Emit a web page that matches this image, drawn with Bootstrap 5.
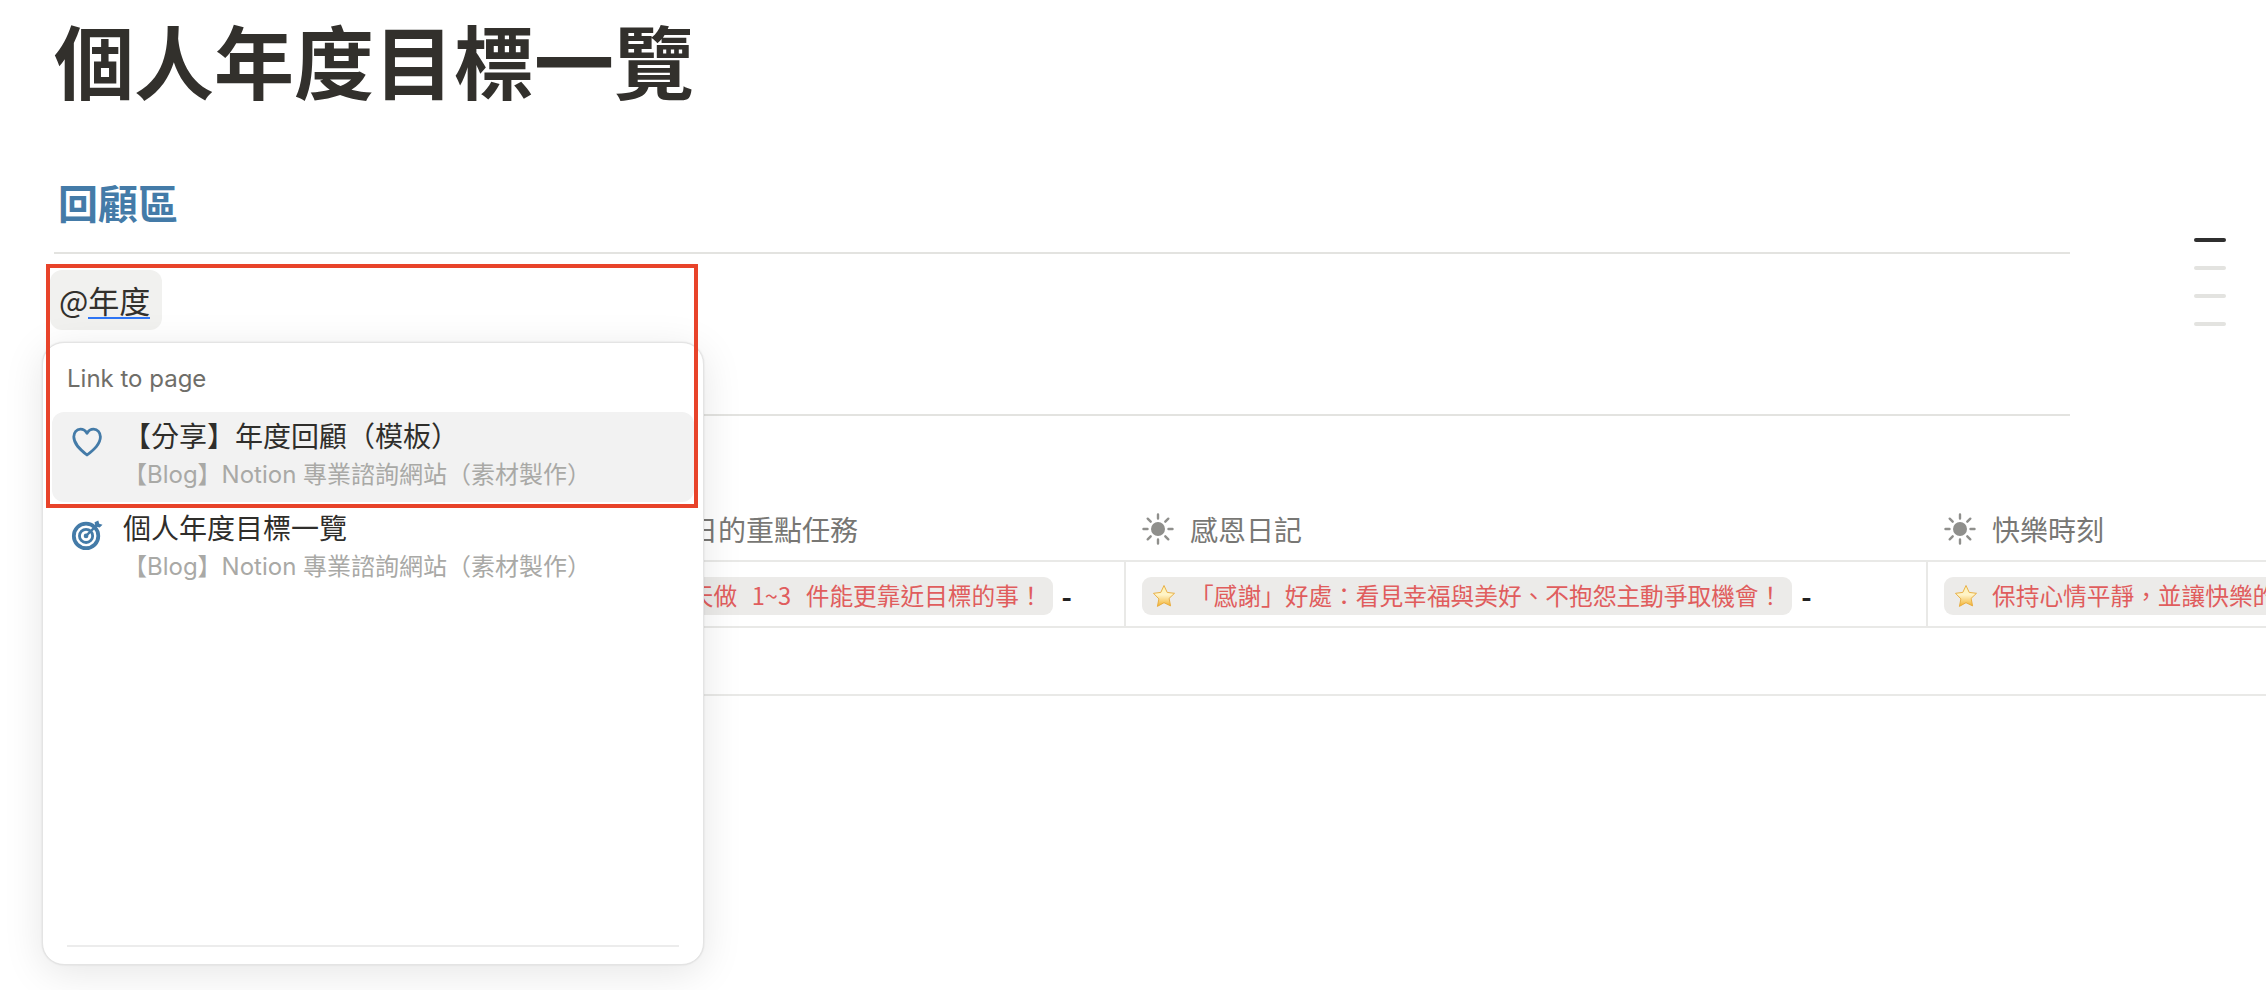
<!DOCTYPE html>
<html lang="zh-Hant">
<head>
<meta charset="utf-8">
<title>個人年度目標一覽</title>
<link href="https://cdn.jsdelivr.net/npm/bootstrap@5.3.0/dist/css/bootstrap.min.css" rel="stylesheet">
<style>
html,body{height:990px;overflow:hidden;background:#fff}
body{font-family:Inter,"Noto Sans CJK TC",sans-serif;color:#37352f}
.pg{width:2266px;height:990px;overflow:hidden;padding-left:54px}
.doc-title{font-family:"Noto Sans CJK TC",sans-serif;font-size:80px;font-weight:700;line-height:92px;margin:12px 0 0 0;color:#32302c}
.sect{font-family:"Noto Sans CJK TC",sans-serif;font-size:40px;font-weight:700;line-height:52px;margin:72px 0 0 4px;color:#447ba8}
.rule{height:2px;background:#e3e3e0;width:2016px}
.rule-a{margin-top:24px}
.zone{height:160px;padding-top:16px}
.chip{margin-left:-4px;width:112px;height:60px;background:#f1f1ef;border-radius:12px;padding-left:9px;font-size:31px;font-family:"Noto Sans CJK TC",sans-serif;color:#32302c;white-space:nowrap}
.chip u{text-decoration:none;border-bottom:2.500px solid #2f76f5;display:block;line-height:35px}
.tbl{margin-top:97px;display:grid;grid-template-columns:546px 524px 802px 400px;width:2272px}
.th{height:32px;display:flex;align-items:center;gap:16px;padding-left:18px;font-size:28px;line-height:32px;color:#787774;font-family:"Noto Sans CJK TC",sans-serif;white-space:nowrap}
.th-near{padding-left:14px}
.trow{grid-column:1/-1;height:2px;background:#e9e9e7;width:2212px}
.trow-a{margin-top:15px}
.td{height:64px;padding:15px 0 0 16px;display:flex;align-items:flex-start;border-left:2px solid #e9e9e7;white-space:nowrap;font-family:"Noto Sans CJK TC",sans-serif}
.td-blank{border-left:0}
.tag{display:inline-flex;align-items:center;height:38px;background:#ecebe9;border-radius:9px;padding:0 10px;font-size:23.700px;color:#e05d5d;white-space:pre;gap:14px}
.tag-wide{word-spacing:2px}
.dash{margin-left:9px;font-size:28px;font-weight:600;line-height:38px;color:#222}
.rule-c{margin-top:66px;width:2212px;background:#e9e9e7}
.toc{right:40px;top:238px;width:32px;gap:24px}
.toc i{display:block;height:4px;border-radius:2px;background:#e3e3e0}
.toc i:first-child{background:#2f2f2f}
.pop{left:42px;top:342px;width:662px;height:623px;background:#fff;border:1px solid #e4e4e4;border-radius:22px;box-shadow:0 0 2px rgba(0,0,0,.12),0 8px 40px rgba(0,0,0,.1);padding:0 9px;z-index:2}
.pop-h{height:69px;padding:20px 0 0 15px;font-size:24px;line-height:32px;color:#6f6e69}
.item{height:90px;border-radius:12px;padding-left:19px;gap:20px}
.item-on{background:#f2f2f2}
.item+.item{padding-top:2px}
.item-t{font-size:28px;line-height:36px;color:#2f2e2b;padding-top:5px;font-family:"Noto Sans CJK TC",sans-serif;white-space:nowrap}
.item-s{font-size:24px;line-height:36px;color:#a9a9a6;padding-top:4px;white-space:nowrap}
.ico{width:32px;flex:none;margin-top:14px}
.pop-f{height:2px;background:#ececec;margin:auto 15px 17px 15px}
.mark-box{left:46px;top:264px;width:652px;height:244px;border:4px solid #e8432a;z-index:3;pointer-events:none}
</style>
</head>
<body>
<div class="pg position-relative">
  <h1 class="doc-title">個人年度目標一覽</h1>
  <h2 class="sect">回顧區</h2>
  <div class="rule rule-a"></div>
  <div class="zone"><div class="chip d-flex align-items-center"><span>@</span><u>年度</u></div></div>
  <div class="rule"></div>
  <div class="tbl">
    <div class="th"></div>
    <div class="th th-near"><svg width="32" height="32" viewBox="0 0 32 32"><g stroke="#8f8f8c" stroke-width="2.400" stroke-linecap="round"><path d="M16 1.500v4M16 26.500v4M1.500 16h4M26.500 16h4M5.700 5.700l3 3M23.300 23.300l3 3M5.700 26.300l3-3M23.300 8.700l3-3"/></g><circle cx="16" cy="16" r="7" fill="#8f8f8c"/></svg><span>今日的重點任務</span></div>
    <div class="th"><svg width="32" height="32" viewBox="0 0 32 32"><g stroke="#8f8f8c" stroke-width="2.400" stroke-linecap="round"><path d="M16 1.500v4M16 26.500v4M1.500 16h4M26.500 16h4M5.700 5.700l3 3M23.300 23.300l3 3M5.700 26.300l3-3M23.300 8.700l3-3"/></g><circle cx="16" cy="16" r="7" fill="#8f8f8c"/></svg><span>感恩日記</span></div>
    <div class="th"><svg width="32" height="32" viewBox="0 0 32 32"><g stroke="#8f8f8c" stroke-width="2.400" stroke-linecap="round"><path d="M16 1.500v4M16 26.500v4M1.500 16h4M26.500 16h4M5.700 5.700l3 3M23.300 23.300l3 3M5.700 26.300l3-3M23.300 8.700l3-3"/></g><circle cx="16" cy="16" r="7" fill="#8f8f8c"/></svg><span>快樂時刻</span></div>
    <div class="trow trow-a"></div>
    <div class="td td-blank"></div>
    <div class="td"><span class="tag tag-wide"><svg width="24" height="24" viewBox="0 0 24 24"><defs><linearGradient id="st" x1="0" y1="0" x2="0" y2="1"><stop offset="0" stop-color="#fff3b0"/><stop offset=".45" stop-color="#fff4c8"/><stop offset="1" stop-color="#f2b12e"/></linearGradient></defs><path d="M12 1.500l3.200 6.900 7.300.9-5.400 5.100 1.500 7.500L12 18.700l-6.600 3.700 1.500-7.500L1.500 9.300l7.300-.9z" fill="url(#st)" stroke="#e6a93a" stroke-width=".9" stroke-linejoin="round"/></svg><span>今天做  1~3  件能更靠近目標的事！</span></span><span class="dash">-</span></div>
    <div class="td"><span class="tag"><svg width="24" height="24" viewBox="0 0 24 24"><path d="M12 1.500l3.200 6.900 7.300.9-5.400 5.100 1.500 7.500L12 18.700l-6.600 3.700 1.500-7.500L1.500 9.300l7.300-.9z" fill="url(#st)" stroke="#e6a93a" stroke-width=".9" stroke-linejoin="round"/></svg><span>「感謝」好處：看見幸福與美好、不抱怨主動爭取機會！</span></span><span class="dash">-</span></div>
    <div class="td"><span class="tag"><svg width="24" height="24" viewBox="0 0 24 24"><path d="M12 1.500l3.200 6.900 7.300.9-5.400 5.100 1.500 7.500L12 18.700l-6.600 3.700 1.500-7.500L1.500 9.300l7.300-.9z" fill="url(#st)" stroke="#e6a93a" stroke-width=".9" stroke-linejoin="round"/></svg><span>保持心情平靜，並讓快樂的事情發生！</span></span></div>
    <div class="trow"></div>
  </div>
  <div class="rule rule-c"></div>

  <div class="toc position-absolute d-flex flex-column"><i></i><i></i><i></i><i></i></div>

  <div class="pop position-absolute d-flex flex-column">
    <div class="pop-h">Link to page</div>
    <div class="item item-on d-flex">
      <svg class="ico" height="32" viewBox="0 0 32 32" fill="none"><path d="M16 29C9 23.500 2.800 18 2.800 10.800 2.800 6.400 5.600 3.200 9.400 3.200c2.800 0 5.200 1.500 6.600 4.100 1.400-2.600 3.800-4.100 6.600-4.100 3.800 0 6.800 3.200 6.800 7.600C29.400 18 23 23.500 16 29z" stroke="#447ba8" stroke-width="2.800" stroke-linejoin="round"/></svg>
      <div><div class="item-t">【分享】年度回顧（模板）</div><div class="item-s">【Blog】Notion 專業諮詢網站（素材製作）</div></div>
    </div>
    <div class="item d-flex">
      <svg class="ico" height="34" viewBox="0 0 34 34" fill="none"><circle cx="16" cy="18" r="13" stroke="#447ba8" stroke-width="4"/><circle cx="16" cy="18" r="7" stroke="#447ba8" stroke-width="3"/><circle cx="16" cy="18" r="2.500" fill="#447ba8"/><path d="M16 18L28 6" stroke="#447ba8" stroke-width="2.500"/><path d="M25 3.500l1 4.500 4.500 1 3-3-3.500-1-1-3.500z" fill="#447ba8"/></svg>
      <div><div class="item-t">個人年度目標一覽</div><div class="item-s">【Blog】Notion 專業諮詢網站（素材製作）</div></div>
    </div>
    <div class="pop-f"></div>
  </div>
  <div class="mark-box position-absolute"></div>
</div>
<script src="https://cdn.jsdelivr.net/npm/bootstrap@5.3.0/dist/js/bootstrap.bundle.min.js"></script>
</body>
</html>
